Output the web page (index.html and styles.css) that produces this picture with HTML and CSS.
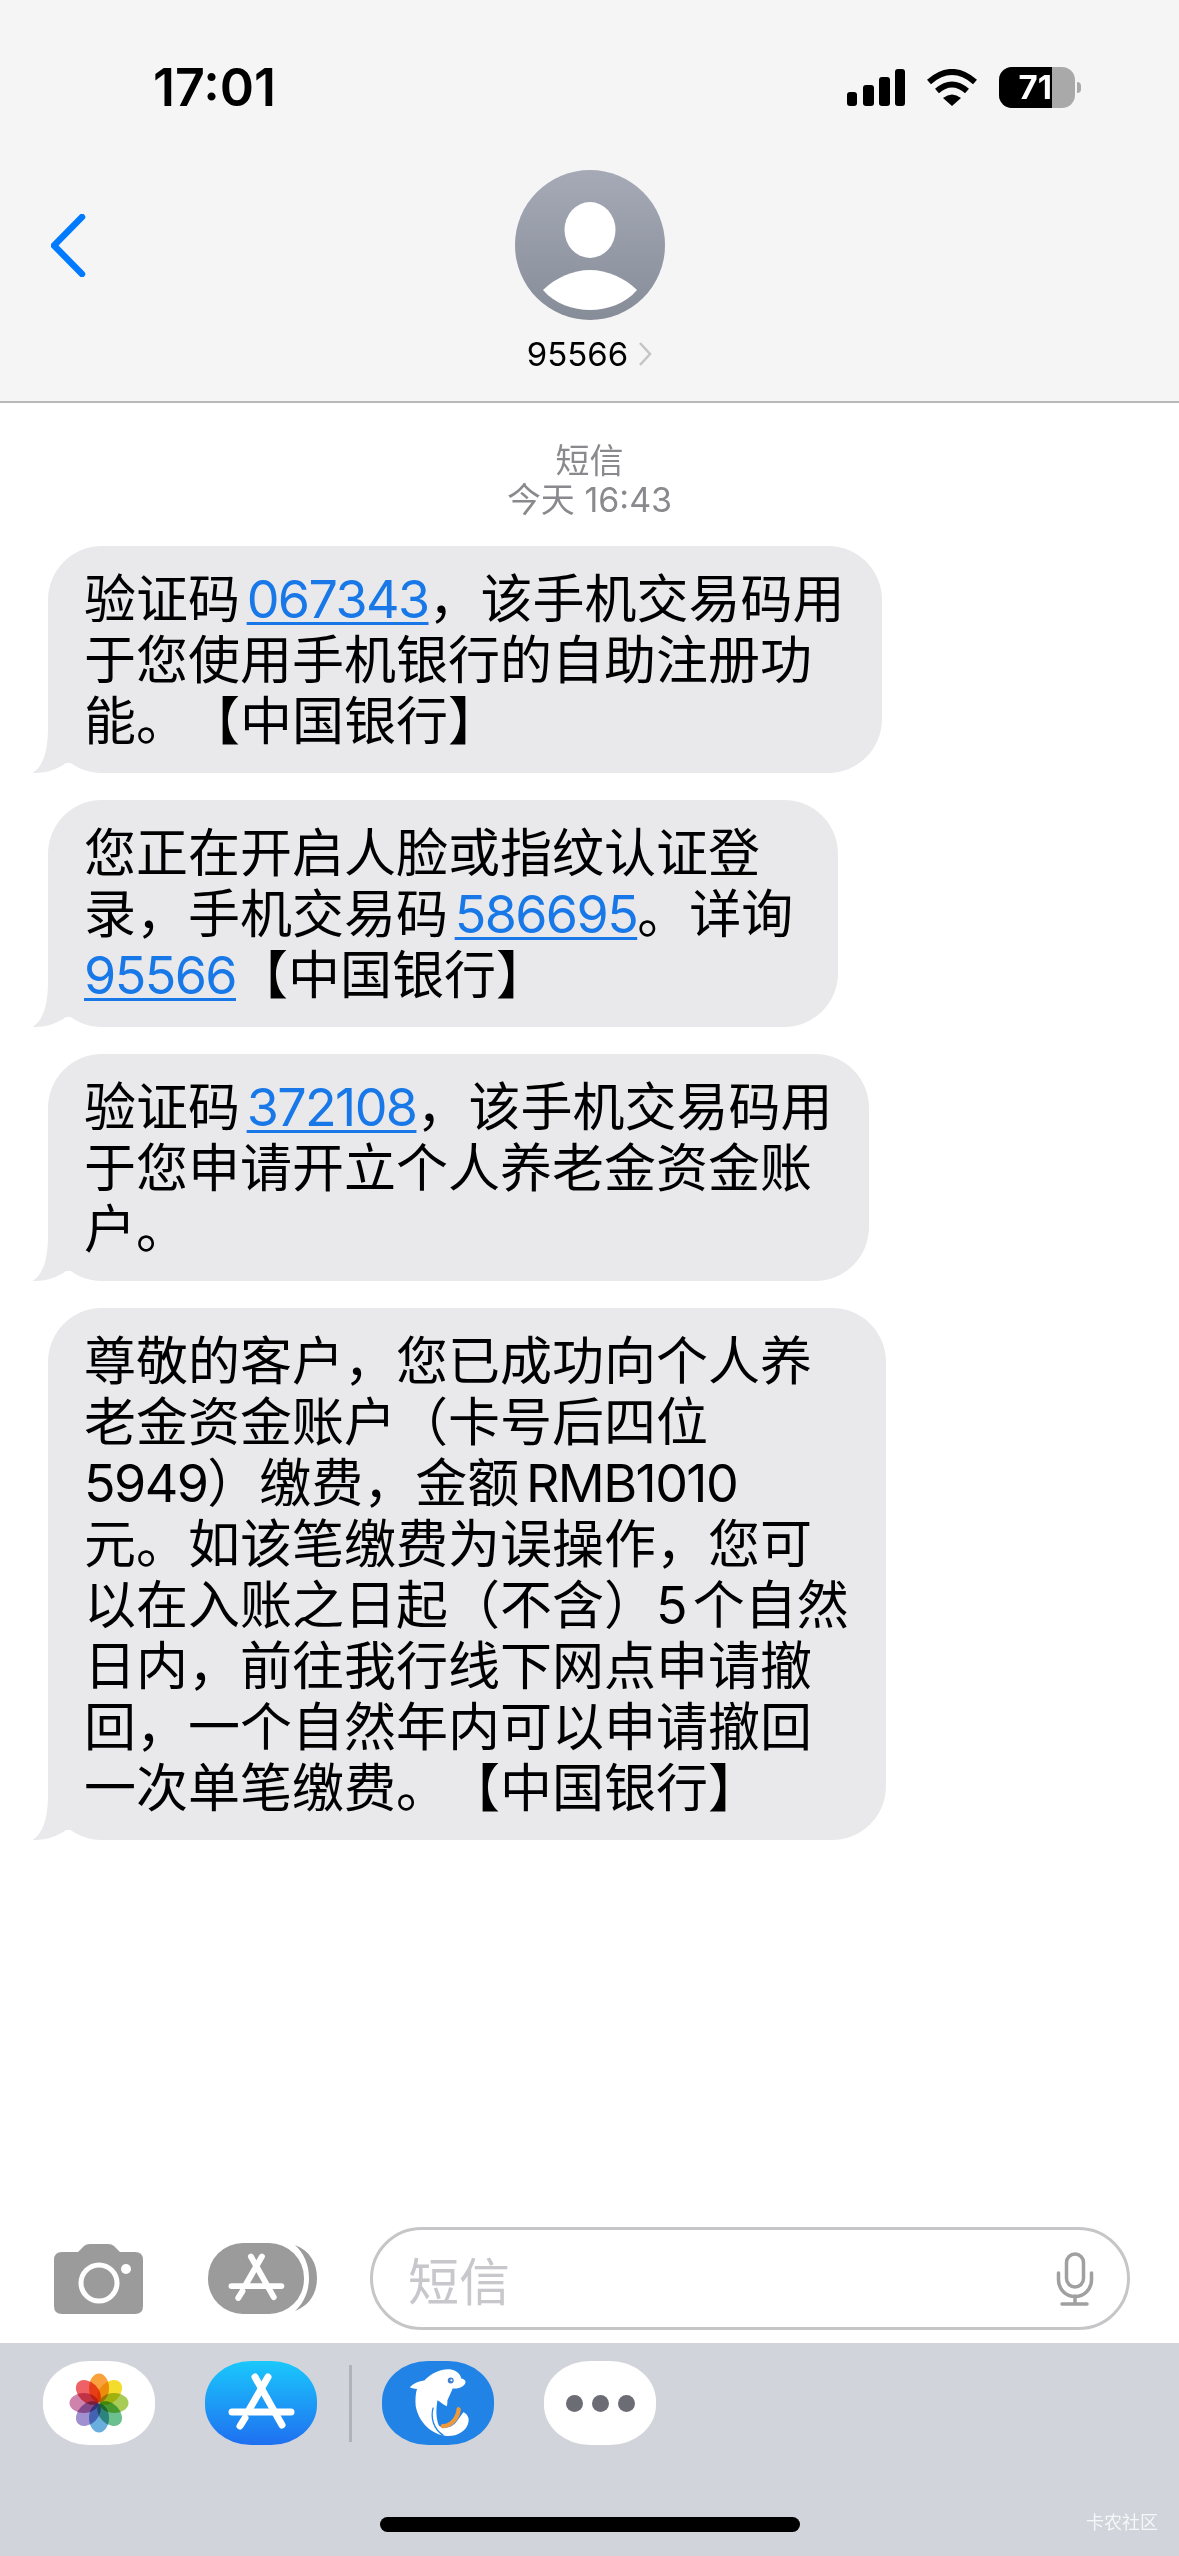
FILE: index.html
```html
<!DOCTYPE html>
<html lang="zh-CN">
<head>
    <meta charset="UTF-8">
    <meta name="viewport" content="width=device-width, initial-scale=1.0">
    <title>95566</title>
    <link rel="stylesheet" href="styles.css">
</head>
<body>
    <svg class="defs" width="0" height="0">
        <symbol id="store-a" viewBox="0 0 112 84">
            <g fill="none" stroke="#fff" stroke-width="7" stroke-linecap="round">
                <path d="M50 16L77 64"/>
                <path d="M63 16L44 49"/>
                <path d="M40 57L35 65"/>
                <path d="M27 51H86"/>
            </g>
        </symbol>
    </svg>

    <header class="top">
        <div class="status">
            <span class="clock">17:01</span>
            <div class="status-icons">
                <svg class="signal" width="58" height="37" viewBox="0 0 58 37">
                    <rect x="0" y="23" width="10" height="14" rx="3"/>
                    <rect x="16" y="16" width="11" height="21" rx="3"/>
                    <rect x="32" y="8" width="11" height="29" rx="3"/>
                    <rect x="48" y="0" width="10" height="37" rx="3"/>
                </svg>
                <svg class="wifi" width="50" height="37" viewBox="0 0 50 37">
                    <path d="M2 13Q25 -7 48 13" fill="none" stroke="#000" stroke-width="6"/>
                    <path d="M10 22Q25 9 40 22" fill="none" stroke="#000" stroke-width="6"/>
                    <path d="M25 37L16 29Q25 22 34 29Z"/>
                </svg>
                <div class="battery-wrap">
                    <div class="battery">
                        <div class="battery-level">71</div>
                    </div>
                    <div class="battery-nub"></div>
                </div>
            </div>
        </div>
        <div class="nav">
            <svg class="back" width="36" height="63" viewBox="0 0 36 63">
                <path d="M31 3L3 31.5L31 60" fill="none" stroke="#007aff" stroke-width="6.5" stroke-linecap="round" stroke-linejoin="round"/>
            </svg>
            <div class="contact">
                <div class="avatar">
                    <svg width="150" height="150" viewBox="0 0 150 150">
                        <ellipse cx="75" cy="60" rx="25.500" ry="28" fill="#fff"/>
                        <path d="M28 120C40 108 58 100 75 100C92 100 110 108 122 120C110 134 92 140 75 140C58 140 40 134 28 120Z" fill="#fff"/>
                    </svg>
                </div>
                <div class="contact-name">
                    <span>95566</span>
                    <svg width="14" height="24" viewBox="0 0 14 24">
                        <path d="M2 1L12 12L2 23" fill="none" stroke="#c4c4c6" stroke-width="2.5"/>
                    </svg>
                </div>
            </div>
        </div>
    </header>

    <main class="thread">
        <div class="stamp">短信<br>今天 16:43</div>
        <div class="bubble">验证码 <a class="link">067343</a>，该手机交易码用<br>于您使用手机银行的自助注册功<br>能。【中国银行】</div>
        <div class="bubble bubble-loose">您正在开启人脸或指纹认证登<br>录，手机交易码 <a class="link">586695</a>。详询<br><a class="link">95566</a>【中国银行】</div>
        <div class="bubble">验证码 <a class="link">372108</a>，该手机交易码用<br>于您申请开立个人养老金资金账<br>户。</div>
        <div class="bubble">尊敬的客户，您已成功向个人养<br>老金资金账户（卡号后四位<br><span class="num">5949</span>）缴费，金额 <span class="num">RMB1010</span><br>元。如该笔缴费为误操作，您可<br>以在入账之日起（不含）<span class="num">5</span> 个自然<br>日内，前往我行线下网点申请撤<br>回，一个自然年内可以申请撤回<br>一次单笔缴费。【中国银行】</div>
    </main>

    <div class="composer">
        <svg width="89" height="70" viewBox="0 0 89 70">
            <path d="M8 8H24L30 2Q32 0 36 0H54Q58 0 60 2L66 8H81Q89 8 89 16V62Q89 70 81 70H8Q0 70 0 62V16Q0 8 8 8Z" fill="#9b9b9b"/>
            <circle cx="45" cy="39" r="18" fill="none" stroke="#fff" stroke-width="5"/>
            <circle cx="72" cy="25" r="5" fill="#fff"/>
        </svg>
        <svg class="apps-btn" width="109" height="71" viewBox="0 0 109 71">
            <rect width="96" height="71" rx="35" fill="#9b9b9b"/>
            <path d="M87 2C102 8 109 20 109 35C109 50 102 62 87 68C96 60 101 48 101 35C101 22 96 10 87 2Z" fill="#9b9b9b"/>
            <use href="#store-a" width="96" height="71"/>
        </svg>
        <div class="input">
            <span class="placeholder">短信</span>
            <svg width="40" height="54" viewBox="16 11 40 54">
                <rect x="27.5" y="13" width="17" height="33" rx="8.5" fill="none" stroke="#a0a0a0" stroke-width="3.5"/>
                <path d="M19.5 32V39A16.5 16.5 0 0 0 52.500 39V32M36 55V63M23 63H48" fill="none" stroke="#a0a0a0" stroke-width="3.5" stroke-linecap="round"/>
            </svg>
        </div>
    </div>

    <footer class="drawer">
        <div class="app-row">
            <div class="app app-white">
                <svg width="112" height="84" viewBox="-56 -42 112 84">
                    <ellipse class="petal" cy="-15" rx="10" ry="14.500" fill="#f9a23c"/>
                    <ellipse class="petal" cy="-15" rx="10" ry="14.500" fill="#f3dc2c" transform="rotate(45)"/>
                    <ellipse class="petal" cy="-15" rx="10" ry="14.500" fill="#a8cc55" transform="rotate(90)"/>
                    <ellipse class="petal" cy="-15" rx="10" ry="14.500" fill="#6cc090" transform="rotate(135)"/>
                    <ellipse class="petal" cy="-15" rx="10" ry="14.500" fill="#6aaede" transform="rotate(180)"/>
                    <ellipse class="petal" cy="-15" rx="10" ry="14.500" fill="#a190cf" transform="rotate(225)"/>
                    <ellipse class="petal" cy="-15" rx="10" ry="14.500" fill="#cf82ab" transform="rotate(270)"/>
                    <ellipse class="petal" cy="-15" rx="10" ry="14.500" fill="#ee6165" transform="rotate(315)"/>
                </svg>
            </div>
            <div class="app app-store">
                <svg width="112" height="84"><use href="#store-a" width="112" height="84"/></svg>
            </div>
            <div class="app-divider"></div>
            <div class="app app-ctrip">
                <svg width="113" height="84" viewBox="0 10 342 252">
                    <path d="M205 34C226 36 238 50 240 62C250 64 255 70 252 76C246 88 230 94 214 92C208 104 204 116 198 128C198 134 198 140 196 146C186 142 178 134 168 128C164 150 162 180 172 204C184 214 210 214 226 192L246 164C256 168 264 178 262 192C258 222 224 238 196 236C150 232 112 196 102 146C100 124 102 106 106 94C98 92 92 92 84 88C96 76 112 70 128 68C150 44 180 32 205 34Z" fill="#fff"/>
                    <path d="M155 150C146 180 156 216 186 234" fill="none" stroke="#2183e6" stroke-width="4"/>
                    <path d="M232 155C230 180 212 204 184 206" fill="none" stroke="#f0983a" stroke-width="13" stroke-linecap="round"/>
                    <circle cx="208" cy="68" r="9" fill="#3d7fd0"/>
                    <circle cx="210" cy="67" r="3" fill="#fff"/>
                </svg>
            </div>
            <div class="app app-white app-more">
                <span class="dot"></span><span class="dot"></span><span class="dot"></span>
            </div>
        </div>
        <div class="home-bar"></div>
        <span class="watermark">卡农社区</span>
    </footer>
</body>
</html>
```

FILE: styles.css
```css
* {
    margin: 0;
    padding: 0;
    box-sizing: border-box;
}

body {
    width: 1179px;
    height: 2556px;
    overflow: hidden;
    display: flex;
    flex-direction: column;
    background: #fff;
    font-family: Inter, "Noto Sans CJK SC", sans-serif;
    color: #000;
}

.defs {
    position: absolute;
}

svg {
    display: block;
}

/* header */
.top {
    height: 403px;
    padding-top: 67px;
    background: #f5f5f5;
    border-bottom: 2px solid #b8b8b8;
}

.status {
    display: flex;
    justify-content: space-between;
    align-items: center;
    height: 41px;
    padding: 0 98px 0 153px;
}

.clock {
    font-size: 52px;
    font-weight: 600;
}

.status-icons {
    display: flex;
    align-items: center;
    gap: 22px;
}

.battery-wrap {
    display: flex;
    align-items: center;
    gap: 2px;
}

.battery {
    width: 76px;
    height: 41px;
    border-radius: 13px;
    background: #a9a9a9;
    overflow: hidden;
}

.battery-level {
    width: 53px;
    height: 41px;
    background: #000;
    color: #fff;
    font-size: 33px;
    font-weight: 700;
    line-height: 41px;
    text-align: right;
}

.battery-nub {
    width: 4px;
    height: 11px;
    background: #a9a9a9;
    border-radius: 0 4px 4px 0;
}

.nav {
    display: grid;
    grid-template-columns: 1fr auto 1fr;
    padding: 62px 51px 0;
}

.back {
    margin-top: 44px;
}

.contact {
    display: flex;
    flex-direction: column;
    align-items: center;
}

.avatar {
    width: 150px;
    height: 150px;
    border-radius: 50%;
    background: linear-gradient(180deg, #a5aab6 0%, #868c98 100%);
}

.contact-name {
    display: flex;
    align-items: center;
    gap: 10px;
    margin-top: 14px;
    font-size: 33px;
    line-height: 40px;
}

/* messages */
.thread {
    flex: 1;
    display: flex;
    flex-direction: column;
    align-items: flex-start;
    gap: 27px;
    padding: 38px 0 0 48px;
}

.stamp {
    align-self: center;
    margin-left: -48px;
    font-size: 34px;
    line-height: 39px;
    text-align: center;
    color: #8a8a8e;
}

.bubble {
    position: relative;
    padding: 23px 37px 21px 36px;
    background: #e9e9eb;
    border-radius: 54px;
    font-size: 52px;
    line-height: 61px;
    white-space: nowrap;
    word-spacing: -8px;
    text-spacing-trim: space-all;
}

.bubble-loose {
    padding-right: 45px;
}

.bubble::before {
    content: '';
    position: absolute;
    left: -16px;
    bottom: 0;
    width: 40px;
    height: 50px;
    background: #e9e9eb;
    clip-path: path('M16 0V5C16 25 12 43 1 49.500Q1 50 3 50C15 50 26 46 34 40L40 40V0Z');
}

.num,
.link {
    letter-spacing: -1.6px;
}

.link {
    color: #1878e8;
    text-decoration: underline;
    text-decoration-thickness: 3px;
    text-underline-offset: 4px;
}

/* input row */
.composer {
    display: flex;
    align-items: center;
    padding: 0 49px 13px 54px;
}

.apps-btn {
    margin-left: 65px;
}

.input {
    flex: 1;
    display: flex;
    align-items: center;
    justify-content: space-between;
    height: 103px;
    margin-left: 53px;
    padding: 0 32px 0 35px;
    border: 3px solid #c6c6c8;
    border-radius: 52px;
}

.placeholder {
    font-size: 51px;
    color: #c7c7cc;
}

/* app drawer */
.drawer {
    position: relative;
    height: 213px;
    background: #d1d4db;
    padding-top: 18px;
}

.app-row {
    display: flex;
    align-items: center;
    gap: 50px;
    padding-left: 43px;
}

.app {
    width: 112px;
    height: 84px;
    border-radius: 46px / 40px;
}

.app-white {
    background: #fff;
}

.app-store {
    background: linear-gradient(180deg, #1ac8fc 0%, #1f6ff0 100%);
    margin-right: -18px;
}

.app-divider {
    width: 3px;
    height: 77px;
    background: #b0b3ba;
    margin-right: -20px;
}

.app-ctrip {
    background: #2183e6;
}

.app-more {
    display: flex;
    align-items: center;
    justify-content: center;
    gap: 9px;
}

.dot {
    width: 17px;
    height: 17px;
    border-radius: 50%;
    background: #6c6c74;
}

.petal {
    mix-blend-mode: multiply;
}

.home-bar {
    width: 420px;
    height: 15px;
    margin: 72px auto 0;
    background: #000;
    border-radius: 8px;
}

.watermark {
    position: absolute;
    right: 21px;
    bottom: 22px;
    font-size: 18px;
    color: rgba(255, 255, 255, 0.8);
}
```
